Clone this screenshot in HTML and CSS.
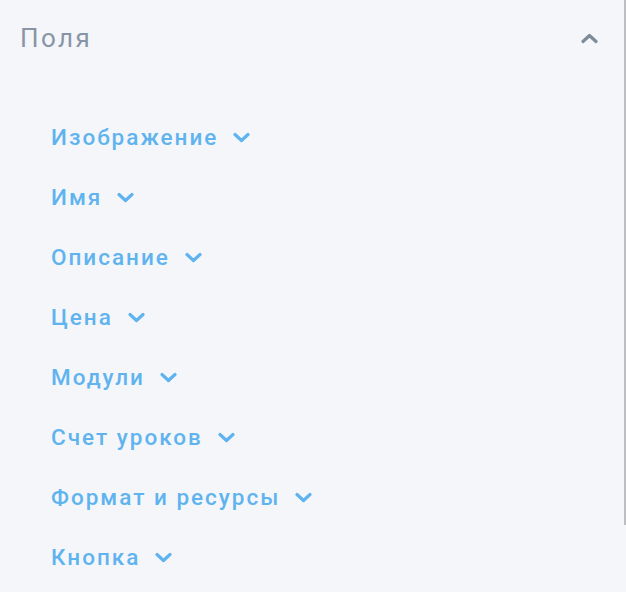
FILE: index.html
```html
<!DOCTYPE html>
<html>
<head>
    <meta charset="utf-8"/>
    <title>Поля</title>
    <link rel="stylesheet" href="styles.css">
</head>
<body>
<div class="panel">
    <header class="panel-head">
        <h2>Поля</h2>
        <svg class="toggle" width="17" height="11" viewBox="0 0 17 11"><path d="M2 8.5 L8.5 2.5 L15 8.5" fill="none" stroke="#7f8b99" stroke-width="3.2" stroke-linecap="round" stroke-linejoin="round"/></svg>
    </header>

    <ul class="fields">
        <li>Изображение <svg class="chev" width="17" height="11" viewBox="0 0 17 11"><path d="M2 2.5 L8.5 8.5 L15 2.5" fill="none" stroke="#5fb4ef" stroke-width="3.2" stroke-linecap="round" stroke-linejoin="round"/></svg></li>
        <li>Имя <svg class="chev" width="17" height="11" viewBox="0 0 17 11"><path d="M2 2.5 L8.5 8.5 L15 2.5" fill="none" stroke="#5fb4ef" stroke-width="3.2" stroke-linecap="round" stroke-linejoin="round"/></svg></li>
        <li>Описание <svg class="chev" width="17" height="11" viewBox="0 0 17 11"><path d="M2 2.5 L8.5 8.5 L15 2.5" fill="none" stroke="#5fb4ef" stroke-width="3.2" stroke-linecap="round" stroke-linejoin="round"/></svg></li>
        <li>Цена <svg class="chev" width="17" height="11" viewBox="0 0 17 11"><path d="M2 2.5 L8.5 8.5 L15 2.5" fill="none" stroke="#5fb4ef" stroke-width="3.2" stroke-linecap="round" stroke-linejoin="round"/></svg></li>
        <li>Модули <svg class="chev" width="17" height="11" viewBox="0 0 17 11"><path d="M2 2.5 L8.5 8.5 L15 2.5" fill="none" stroke="#5fb4ef" stroke-width="3.2" stroke-linecap="round" stroke-linejoin="round"/></svg></li>
        <li>Счет уроков <svg class="chev" width="17" height="11" viewBox="0 0 17 11"><path d="M2 2.5 L8.5 8.5 L15 2.5" fill="none" stroke="#5fb4ef" stroke-width="3.2" stroke-linecap="round" stroke-linejoin="round"/></svg></li>
        <li>Формат и ресурсы <svg class="chev" width="17" height="11" viewBox="0 0 17 11"><path d="M2 2.5 L8.5 8.5 L15 2.5" fill="none" stroke="#5fb4ef" stroke-width="3.2" stroke-linecap="round" stroke-linejoin="round"/></svg></li>
        <li>Кнопка <svg class="chev" width="17" height="11" viewBox="0 0 17 11"><path d="M2 2.5 L8.5 8.5 L15 2.5" fill="none" stroke="#5fb4ef" stroke-width="3.2" stroke-linecap="round" stroke-linejoin="round"/></svg></li>
    </ul>
</div>
<div class="scrollbar"></div>
</body>
</html>
```

FILE: styles.css
```css
body {
    margin: 0;
    background: #f5f6fa;
    font-family: Roboto, "Noto Sans", sans-serif;
    height: 592px;
    overflow: hidden;
}

.panel {
    padding: 0 0 0 20px;
}

.panel-head {
    display: flex;
    align-items: center;
    justify-content: space-between;
    height: 76px;
    padding-right: 28px;
}

.panel-head h2 {
    margin: 0;
    font-size: 26px;
    font-weight: 400;
    letter-spacing: 2.4px;
    color: #8795a6;
}

.toggle {
    display: block;
}

.fields {
    list-style: none;
    margin: 0;
    padding: 31px 0 0 31px;
}

.fields li {
    display: flex;
    align-items: center;
    height: 60px;
    font-size: 22.5px;
    font-weight: 500;
    letter-spacing: 2px;
    color: #5fb4ef;
}

.chev {
    margin-left: 15px;
    margin-top: 1px;
}

.scrollbar {
    position: absolute;
    top: 0;
    right: 0;
    width: 2px;
    height: 525px;
    background: #bdbec2;
}
```
